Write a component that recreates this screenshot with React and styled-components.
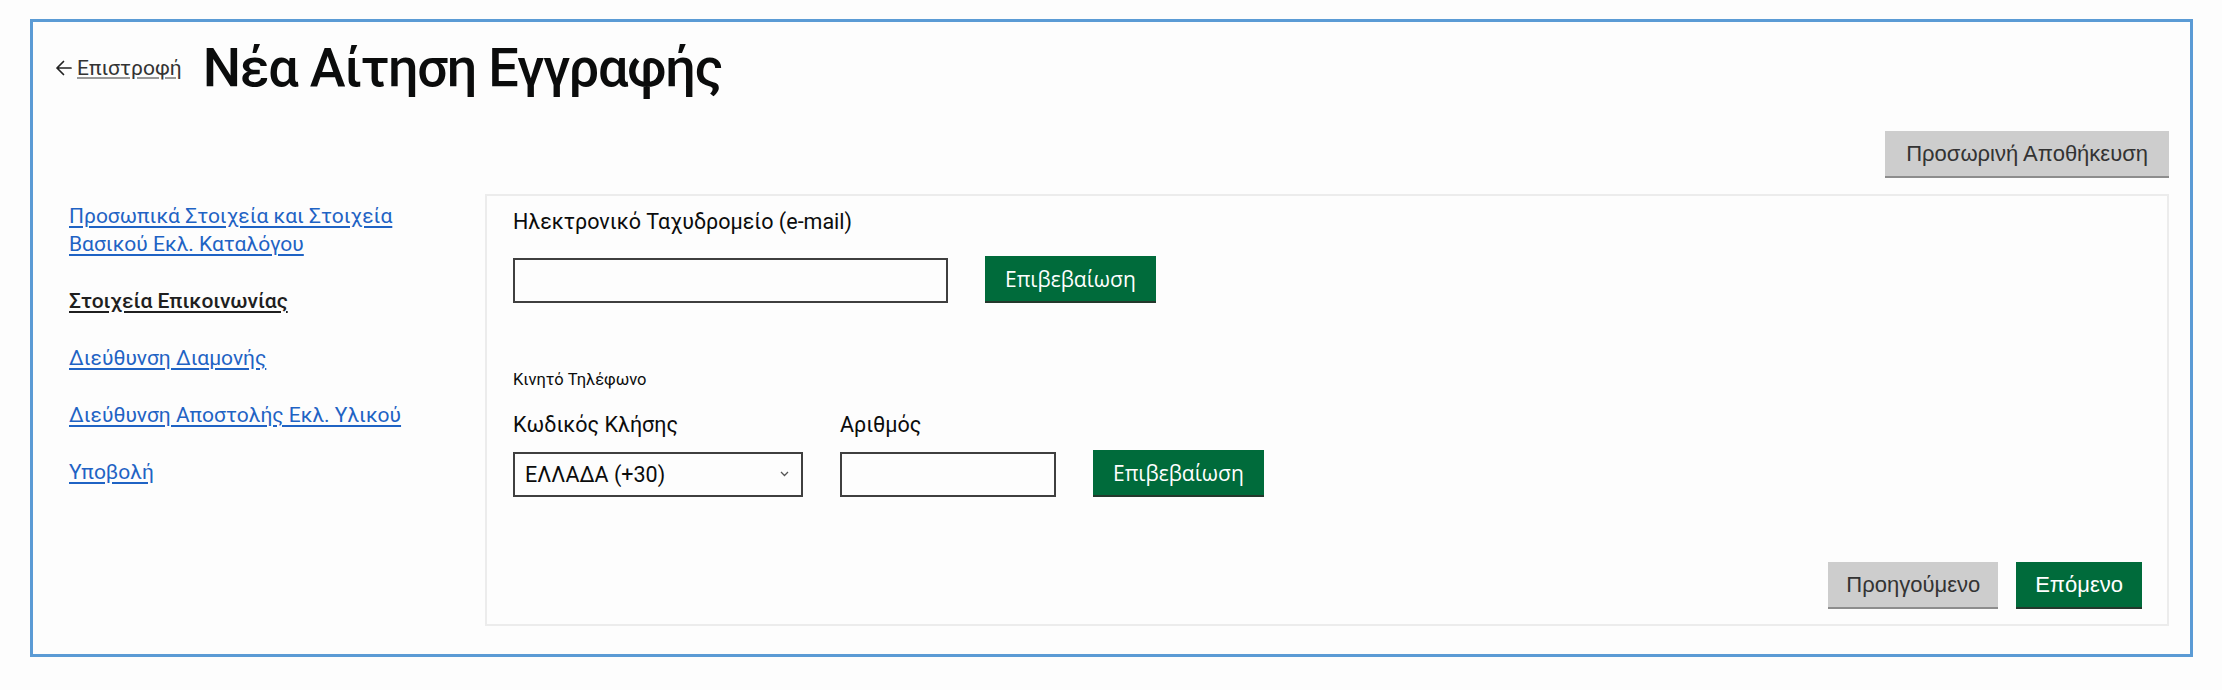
import styled, { createGlobalStyle } from 'styled-components';

const GlobalStyle = createGlobalStyle`
  html, body {
    margin: 0;
    padding: 0;
    background: #fdfdfd;
  }
  body {
    font-family: Roboto, "Liberation Sans", sans-serif;
    color: #0b0c0c;
  }
  * {
    box-sizing: border-box;
  }
`;

const steps = [
  { label: 'Προσωπικά Στοιχεία και Στοιχεία Βασικού Εκλ. Καταλόγου' },
  { label: 'Στοιχεία Επικοινωνίας', active: true },
  { label: 'Διεύθυνση Διαμονής' },
  { label: 'Διεύθυνση Αποστολής Εκλ. Υλικού' },
  { label: 'Υποβολή' },
];

function ArrowLeft() {
  return (
    <svg width="17" height="16" viewBox="0 0 17 16" fill="none">
      <path
        d="M16 8H2M8.5 1.5L2 8l6.5 6.5"
        stroke="#222"
        strokeWidth="1.7"
        strokeLinecap="round"
        strokeLinejoin="round"
      />
    </svg>
  );
}

function Chevron() {
  return (
    <svg width="9" height="6" viewBox="0 0 9 6" fill="none">
      <path d="M1 1l3.5 3.5L8 1" stroke="#555" strokeWidth="1.3" />
    </svg>
  );
}

export default function App() {
  return (
    <>
      <GlobalStyle />
      <Frame>
        <Header>
          <BackLink href="#">
            <ArrowLeft />
            <span>Επιστροφή</span>
          </BackLink>
          <Title>Νέα Αίτηση Εγγραφής</Title>
        </Header>

        <Toolbar>
          <GreyButton>Προσωρινή Αποθήκευση</GreyButton>
        </Toolbar>

        <Main>
          <Sidebar>
            {steps.map((step) => (
              <StepLink key={step.label} href="#" $active={step.active}>
                {step.label}
              </StepLink>
            ))}
          </Sidebar>

          <Panel>
            <FieldLabel>Ηλεκτρονικό Ταχυδρομείο (e-mail)</FieldLabel>
            <InputRow $top={22}>
              <TextInput $width={435} type="email" />
              <GreenButton>Επιβεβαίωση</GreenButton>
            </InputRow>

            <Legend>Κινητό Τηλέφωνο</Legend>
            <InputRow $top={23}>
              <Field>
                <FieldLabel>Κωδικός Κλήσης</FieldLabel>
                <SelectWrap>
                  <Select defaultValue="30">
                    <option value="30">ΕΛΛΑΔΑ (+30)</option>
                  </Select>
                  <ChevronSlot>
                    <Chevron />
                  </ChevronSlot>
                </SelectWrap>
              </Field>
              <Field>
                <FieldLabel>Αριθμός</FieldLabel>
                <TextInput $width={216} type="tel" />
              </Field>
              <GreenButton>Επιβεβαίωση</GreenButton>
            </InputRow>

            <Footer>
              <GreyButton $pad={18}>Προηγούμενο</GreyButton>
              <GreenButton $plain>Επόμενο</GreenButton>
            </Footer>
          </Panel>
        </Main>
      </Frame>
    </>
  );
}

const Frame = styled.div`
  width: 2163px;
  height: 638px;
  margin: 19px 0 0 30px;
  border: 3px solid #5b9bd5;
  padding: 13px 21px 28px 22px;
  display: flex;
  flex-direction: column;
  background: #fdfdfd;
`;

const Header = styled.header`
  display: flex;
  align-items: center;
  gap: 21px;
`;

const BackLink = styled.a`
  display: inline-flex;
  align-items: center;
  gap: 5px;
  font-size: 21px;
  color: #333;
  text-decoration: underline;
  text-decoration-color: #999;
  text-underline-offset: 2px;
`;

const Title = styled.h1`
  margin: 0;
  font-size: 54px;
  line-height: 66px;
  letter-spacing: -1.2px;
  font-weight: 500;
  color: #0b0c0c;
`;

const Toolbar = styled.div`
  display: flex;
  justify-content: flex-end;
  margin-top: 30px;
`;

const GreyButton = styled.button`
  height: 45px;
  margin: 0 0 2px;
  padding: 0 ${(p) => p.$pad ?? 21}px;
  border: none;
  background: #cdcdcd;
  box-shadow: 0 2px 0 #8d8d8d;
  color: #333;
  font-family: "Liberation Sans", Arial, sans-serif;
  font-size: 22px;
  cursor: pointer;
`;

const GreenButton = styled.button`
  height: 45px;
  margin: 0 0 2px;
  padding: 0 ${(p) => (p.$plain ? 19 : 20)}px;
  border: none;
  background: #006b3b;
  box-shadow: 0 2px 0 #24382c;
  color: #fff;
  font-family: ${(p) =>
    p.$plain ? '"Liberation Sans", Arial, sans-serif' : '"Open Sans", Roboto, sans-serif'};
  font-size: ${(p) => (p.$plain ? 22 : 21)}px;
  cursor: pointer;
`;

const Main = styled.div`
  flex: 1;
  display: grid;
  grid-template-columns: 430px 1fr;
  margin-top: 16px;
`;

const Sidebar = styled.nav`
  display: flex;
  flex-direction: column;
  align-items: flex-start;
  gap: 29px;
  padding: 8px 40px 0 14px;
`;

const StepLink = styled.a`
  font-size: 21px;
  line-height: 28px;
  color: ${(p) => (p.$active ? '#1f1f1f' : '#1f63c4')};
  font-weight: ${(p) => (p.$active ? 500 : 400)};
  text-decoration: underline;
  text-underline-offset: 3px;
`;

const Panel = styled.section`
  display: flex;
  flex-direction: column;
  align-items: flex-start;
  border: 2px solid #ececec;
  padding: 13px 25px 15px 26px;
`;

const FieldLabel = styled.label`
  display: block;
  font-size: 21.5px;
  line-height: 25px;
  color: #0b0c0c;
`;

const Legend = styled.div`
  margin-top: 67px;
  font-size: 16.5px;
  line-height: 19px;
  color: #0b0c0c;
`;

const InputRow = styled.div`
  display: flex;
  align-items: flex-end;
  gap: 37px;
  margin-top: ${(p) => p.$top}px;
`;

const Field = styled.div`
  display: flex;
  flex-direction: column;
  gap: 15px;
`;

const TextInput = styled.input`
  width: ${(p) => p.$width}px;
  height: 45px;
  border: 2px solid #3f3f3f;
  background: #fdfdfd;
  font-family: Roboto, sans-serif;
  font-size: 21px;
  padding: 0 10px;
  outline: none;
`;

const SelectWrap = styled.div`
  position: relative;
  width: 290px;
  height: 45px;
`;

const Select = styled.select`
  appearance: none;
  width: 100%;
  height: 100%;
  border: 2px solid #3f3f3f;
  border-radius: 0;
  background: #fdfdfd;
  color: #0b0c0c;
  font-family: Roboto, sans-serif;
  font-size: 21.5px;
  padding: 0 30px 0 10px;
  outline: none;
`;

const ChevronSlot = styled.span`
  position: absolute;
  right: 14px;
  top: 19px;
  display: flex;
  pointer-events: none;
`;

const Footer = styled.div`
  display: flex;
  justify-content: flex-end;
  gap: 18px;
  align-self: stretch;
  margin-top: auto;
`;
